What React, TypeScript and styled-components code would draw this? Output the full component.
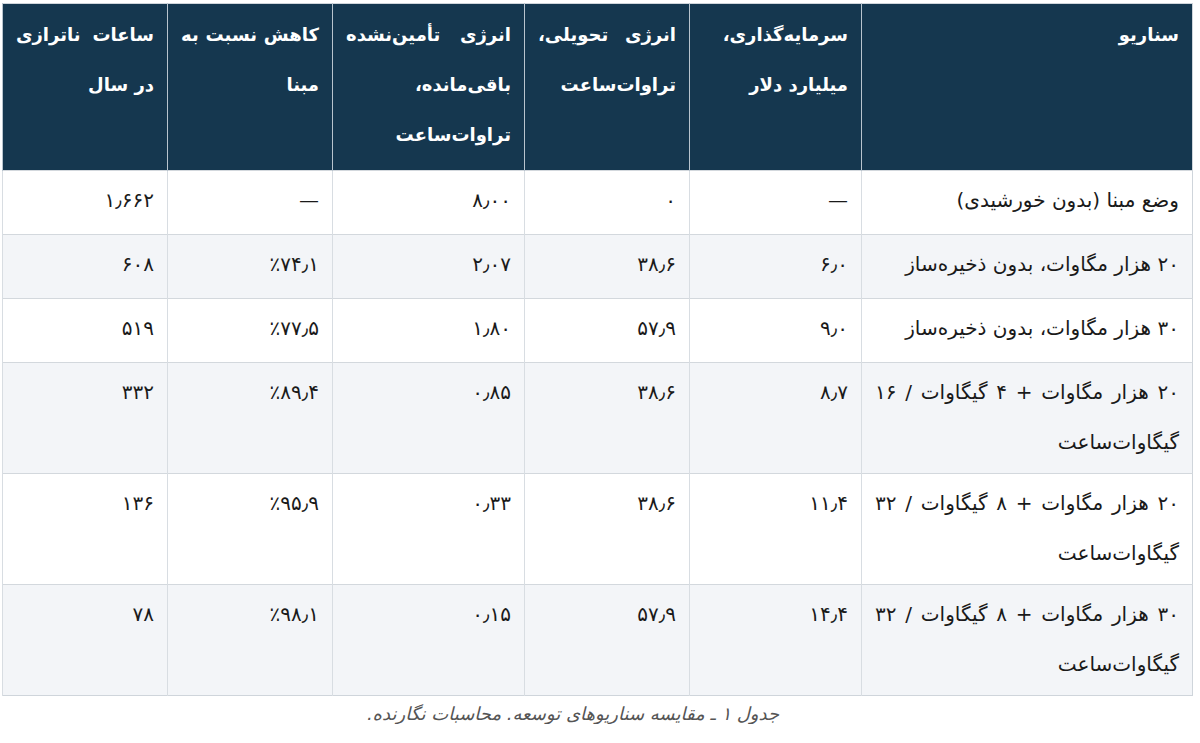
import React from 'react';
import styled, { createGlobalStyle } from 'styled-components';

const GlobalStyle = createGlobalStyle`
  body {
    margin: 0;
    background: #ffffff;
    font-family: 'DejaVu Sans', 'Noto Sans', sans-serif;
  }
`;

const Page = styled.div`
  width: 1190px;
  direction: rtl;
  padding: 3px 3px 0 0;
  margin-left: 3px;
`;

const Table = styled.table`
  width: 1190px;
  border-collapse: collapse;
  table-layout: fixed;
  border: 1px solid #cfd5db;
`;

const Col = styled.col<{ $w: number }>`
  width: ${(p) => p.$w}px;
`;

const HeadCell = styled.th`
  background: #15374f;
  color: #ffffff;
  font-size: 18px;
  font-weight: bold;
  line-height: 50px;
  text-align: justify;
  text-align-last: right;
  vertical-align: top;
  padding: 6px 13px 10px 13px;
  border-left: 1px solid #b8c4ce;
`;

const Row = styled.tr<{ $shade: boolean }>`
  background: ${(p) => (p.$shade ? '#f3f5f8' : '#ffffff')};
  border-top: 1px solid #d3d8dd;
`;

const Cell = styled.td`
  height: 53px;
  color: #1a1a1a;
  font-size: 20px;
  line-height: 50px;
  text-align: justify;
  text-align-last: right;
  vertical-align: top;
  padding: 4px 13px 6px 13px;
  border-left: 1px solid #d8dde2;
`;

const Num = styled.span`
  direction: ltr;
  unicode-bidi: isolate;
`;

const Caption = styled.div`
  text-align: center;
  font-style: italic;
  color: #555555;
  font-size: 18px;
  padding: 7px 50px 0 0;
`;

const columns: { title: string; width: number }[] = [
  { title: 'سناریو', width: 331 },
  { title: 'سرمایه‌گذاری، میلیارد دلار', width: 172 },
  { title: 'انرژی تحویلی، تراوات‌ساعت', width: 165 },
  { title: 'انرژی تأمین‌نشده باقی‌مانده، تراوات‌ساعت', width: 192 },
  { title: 'کاهش نسبت به مبنا', width: 165 },
  { title: 'ساعات ناترازی در سال', width: 165 },
];

const rows: string[][] = [
  ['وضع مبنا (بدون خورشیدی)', '—', '۰', '۸٫۰۰', '—', '۱٫۶۶۲'],
  ['۲۰ هزار مگاوات، بدون ذخیره‌ساز', '۶٫۰', '۳۸٫۶', '۲٫۰۷', '٪۷۴٫۱', '۶۰۸'],
  ['۳۰ هزار مگاوات، بدون ذخیره‌ساز', '۹٫۰', '۵۷٫۹', '۱٫۸۰', '٪۷۷٫۵', '۵۱۹'],
  ['۲۰ هزار مگاوات + ۴ گیگاوات / ۱۶ گیگاوات‌ساعت', '۸٫۷', '۳۸٫۶', '۰٫۸۵', '٪۸۹٫۴', '۳۳۲'],
  ['۲۰ هزار مگاوات + ۸ گیگاوات / ۳۲ گیگاوات‌ساعت', '۱۱٫۴', '۳۸٫۶', '۰٫۳۳', '٪۹۵٫۹', '۱۳۶'],
  ['۳۰ هزار مگاوات + ۸ گیگاوات / ۳۲ گیگاوات‌ساعت', '۱۴٫۴', '۵۷٫۹', '۰٫۱۵', '٪۹۸٫۱', '۷۸'],
];

export default function App() {
  return (
    <Page>
      <GlobalStyle />
      <Table>
        <colgroup>
          {columns.map((c) => (
            <Col key={c.title} $w={c.width} />
          ))}
        </colgroup>
        <thead>
          <tr>
            {columns.map((c) => (
              <HeadCell key={c.title}>{c.title}</HeadCell>
            ))}
          </tr>
        </thead>
        <tbody>
          {rows.map((r, i) => (
            <Row key={i} $shade={i % 2 === 1}>
              {r.map((v, j) => (
                <Cell key={j}>{j === 0 ? v : <Num>{v}</Num>}</Cell>
              ))}
            </Row>
          ))}
        </tbody>
      </Table>
      <Caption>جدول ۱ ـ مقایسه سناریوهای توسعه. محاسبات نگارنده.</Caption>
    </Page>
  );
}
